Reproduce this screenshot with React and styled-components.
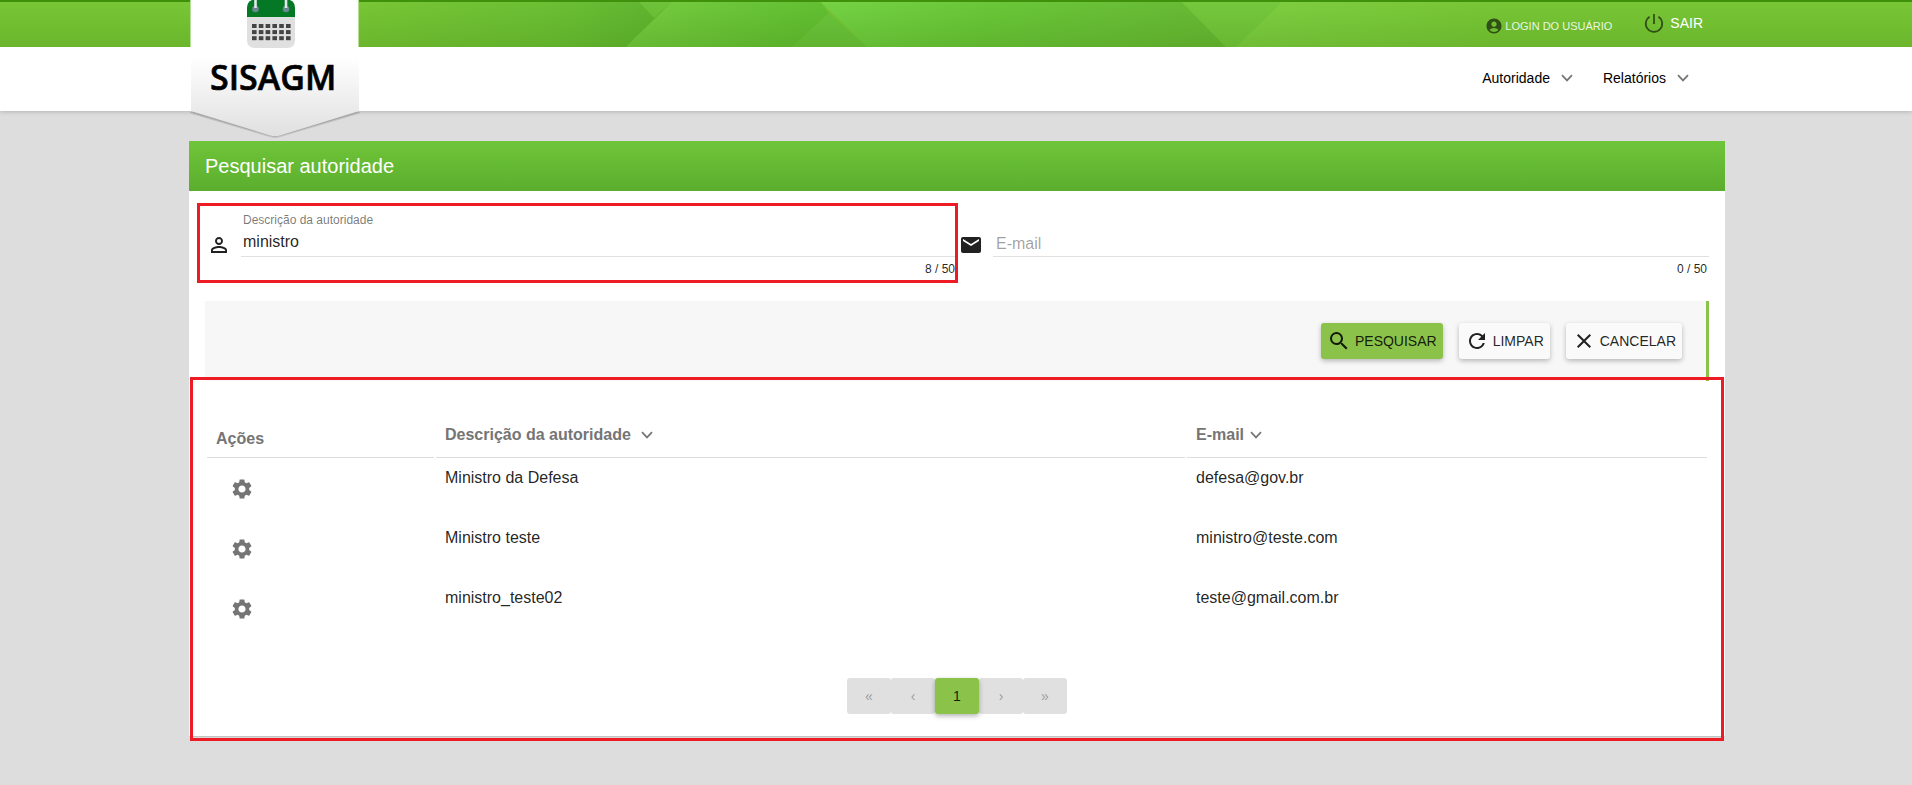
import React, { useState } from 'react';
import styled, { createGlobalStyle } from 'styled-components';
import {
  MdAccountCircle,
  MdClose,
  MdEmail,
  MdPermIdentity,
  MdRefresh,
  MdSearch,
  MdSettings,
} from 'react-icons/md';

const GlobalStyle = createGlobalStyle`
  *, *::before, *::after { box-sizing: border-box; }
  body {
    margin: 0;
    background: #ddd;
    color: rgba(0, 0, 0, 0.87);
    font-family: "Liberation Sans", Arial, sans-serif;
    font-size: 16px;
  }
  button, input { font: inherit; color: inherit; }
  a { color: inherit; text-decoration: none; }
`;

const Container = styled.div`
  position: relative;
  max-width: 1536px;
  margin: 0 auto;
`;

/* Header */

const Header = styled.header`
  position: relative;
  padding-left: 2px;
  background: #fff;
  box-shadow: 0 1px 4px rgba(0, 0, 0, 0.18);
`;

const BannerArt = styled.svg`
  position: absolute;
  top: 0;
  left: 0;
  width: 100%;
  height: 47px;
`;

const UserBar = styled.div`
  display: flex;
  justify-content: flex-end;
  align-items: center;
  gap: 32px;
  height: 47px;
  padding-right: 22px;
  color: #fff;
`;

const UserLink = styled.a`
  display: flex;
  align-items: center;
  gap: 2px;
  padding-top: 4px;
  font-size: 11px;
  color: rgba(255, 255, 255, 0.87);
  svg { color: rgba(0, 0, 0, 0.58); }
`;

const LogoutButton = styled.button`
  display: flex;
  align-items: center;
  gap: 6px;
  padding: 0 0 2px;
  border: 0;
  background: none;
  color: #fff;
  font-size: 14px;
  cursor: pointer;
  svg { color: rgba(0, 0, 0, 0.58); }
`;

const MainNav = styled.nav`
  display: flex;
  justify-content: flex-end;
  align-items: center;
  gap: 30px;
  height: 64px;
  padding: 0 36px 2px 0;
`;

const NavButton = styled.button`
  display: flex;
  align-items: center;
  gap: 11px;
  padding: 0;
  border: 0;
  background: none;
  color: #000;
  font-size: 14px;
  cursor: pointer;
  svg { color: #757575; }
`;

const LogoLink = styled.a`
  position: absolute;
  z-index: 2;
  top: 0;
  left: 0;
  width: 172px;
  height: 140px;
`;

const LogoName = styled.text`
  font-family: "Open Sans", "Noto Sans", sans-serif;
  font-size: 34px;
  font-weight: 600;
`;

/* Panel */

const Main = styled.main`
  padding: 30px 0 44px 2px;
`;

const Panel = styled.section`
  background: #fff;
  box-shadow: 0 2px 1px -1px rgba(0, 0, 0, 0.12);
`;

const PanelTitle = styled.h1`
  margin: 0;
  padding: 0 16px;
  background: linear-gradient(#6fc53a, #5bae2d);
  color: #fff;
  font-size: 20px;
  font-weight: 400;
  line-height: 50px;
`;

const Highlight = styled.div`
  position: absolute;
  inset: ${(p) => p.$inset};
  border: 3px solid #ed1c24;
  pointer-events: none;
`;

const SearchForm = styled.form`
  padding: 22px 16px 0;
`;

const FieldRow = styled.div`
  display: grid;
  grid-template-columns: 1fr 1fr;
`;

const Field = styled.div`
  position: relative;
  display: grid;
  grid-template: 14px 30px auto / 26px minmax(0, 1fr);
  column-gap: 10px;
  > svg {
    grid-area: 2 / 1;
    align-self: end;
    justify-self: end;
  }
`;

const FieldLabel = styled.label`
  grid-area: ${(p) => (p.$filled ? '1 / 2' : '2 / 2')};
  padding: ${(p) => (p.$filled ? '0 2px' : '8px 3px 0')};
  font-size: ${(p) => (p.$filled ? '12px' : '16px')};
  line-height: ${(p) => (p.$filled ? '14px' : '18px')};
  color: ${(p) => (p.$filled ? 'rgba(0, 0, 0, 0.54)' : 'rgba(0, 0, 0, 0.38)')};
`;

const FieldInput = styled.input`
  grid-area: 2 / 2;
  min-width: 0;
  padding: 0 2px;
  border: 0;
  border-bottom: 1px solid #e0e0e0;
  outline: 0;
  background: none;
`;

const Counter = styled.output`
  grid-area: 3 / 2;
  padding: 5px 2px 0;
  font-size: 12px;
  line-height: 14px;
  text-align: right;
`;

const ActionBar = styled.div`
  display: flex;
  justify-content: flex-end;
  align-items: center;
  gap: 16px;
  height: 80px;
  margin-top: 25px;
  padding-right: 24px;
  border-right: 3px solid #8bc34a;
  background: #f7f7f7;
`;

const ActionButton = styled.button`
  display: flex;
  align-items: center;
  gap: 4px;
  height: 36px;
  padding: 0 6px;
  border: 0;
  border-radius: 3px;
  background: ${(p) => (p.$primary ? '#8bc34a' : '#fafafa')};
  box-shadow: 0 2px 5px rgba(0, 0, 0, 0.26);
  font-size: 14px;
  cursor: pointer;
`;

const Results = styled.div`
  position: relative;
  padding: 17px 16px 22px;
`;

const ResultTable = styled.table`
  width: 100%;
  table-layout: fixed;
  border-collapse: separate;
  border-spacing: 2px;
`;

const Column = styled.col`
  width: ${(p) => p.$width}px;
`;

const HeadCell = styled.th`
  height: 58px;
  padding: 0 9px ${(p) => (p.$sortable ? 13 : 9)}px;
  border-bottom: 1px solid #ddd;
  color: #757575;
  line-height: 18px;
  text-align: left;
  vertical-align: bottom;
`;

const SortButton = styled.button`
  display: flex;
  align-items: center;
  gap: 6px;
  padding: 0;
  border: 0;
  background: none;
  font-weight: 700;
  line-height: 18px;
  cursor: pointer;
`;

const Cell = styled.td`
  height: 58px;
  padding: 9px;
  line-height: 18px;
  vertical-align: top;
`;

const GearButton = styled.button`
  display: flex;
  align-items: center;
  justify-content: center;
  width: 40px;
  height: 40px;
  margin-left: 6px;
  padding: 0;
  border: 0;
  background: none;
  color: #757575;
  cursor: pointer;
`;

const Pagination = styled.nav`
  display: flex;
  justify-content: center;
  margin-top: 38px;
`;

const PageButton = styled.button`
  position: relative;
  z-index: ${(p) => (p.$current ? 1 : 0)};
  width: 44px;
  height: 36px;
  padding: 0;
  border: 0;
  border-radius: 3px;
  background: ${(p) => (p.$current ? '#8bc34a' : '#e0e0e0')};
  box-shadow: ${(p) => (p.$current ? '0 2px 5px rgba(0, 0, 0, 0.3)' : 'none')};
  color: ${(p) => (p.$current ? 'rgba(0, 0, 0, 0.87)' : 'rgba(0, 0, 0, 0.34)')};
  font-size: 14px;
`;

function Chevron() {
  return (
    <svg width="12" height="8" viewBox="0 0 12 8" aria-hidden="true">
      <path d="M1 1.2 6 6.4 11 1.2" fill="none" stroke="currentColor" strokeWidth="1.7" />
    </svg>
  );
}

function PowerIcon() {
  return (
    <svg width="20" height="20" viewBox="0 0 20 20" aria-hidden="true">
      <path
        d="M5.6 3.7A8.2 8.2 0 1 0 14.4 3.7M10 1V11"
        fill="none"
        stroke="currentColor"
        strokeWidth="1.8"
      />
    </svg>
  );
}

function Banner() {
  return (
    <BannerArt viewBox="0 0 1912 47" preserveAspectRatio="xMidYMid slice" aria-hidden="true">
      <defs>
        <linearGradient id="deep" x1="0" y1="0" x2="1" y2="0">
          <stop offset="0" stopColor="#5fb832" stopOpacity="0" />
          <stop offset="0.6" stopColor="#5fb832" stopOpacity="0.45" />
          <stop offset="1" stopColor="#5ab02e" stopOpacity="0.9" />
        </linearGradient>
        <linearGradient id="facet" x1="0" y1="0" x2="1" y2="0.15">
          <stop offset="0" stopColor="#78cd42" />
          <stop offset="1" stopColor="#63bf32" />
        </linearGradient>
        <linearGradient id="wide" x1="0" y1="0" x2="1" y2="0.1">
          <stop offset="0" stopColor="#76d345" />
          <stop offset="0.45" stopColor="#6bc739" />
          <stop offset="1" stopColor="#69b935" />
        </linearGradient>
        <linearGradient id="fade" x1="0" y1="0" x2="1" y2="0">
          <stop offset="0" stopColor="#80cf42" />
          <stop offset="1" stopColor="#79c636" />
        </linearGradient>
        <linearGradient id="shade" x1="0" y1="0" x2="0" y2="1">
          <stop offset="0" stopColor="#1e7a00" stopOpacity="0" />
          <stop offset="1" stopColor="#2e6a00" stopOpacity="0.18" />
        </linearGradient>
      </defs>
      <path d="M0 0H1912V47H0Z" fill="#79c636" />
      <path d="M360 0H674L626 47H360Z" fill="url(#deep)" />
      <path d="M637 0H674L654 18Z" fill="#6fc33a" />
      <path d="M674 0H819L829 13 792 47H626Z" fill="url(#facet)" />
      <path d="M829 13 792 47H867Z" fill="#6cc43b" />
      <path d="M819 0H1180L1226 47H867Z" fill="url(#wide)" />
      <path d="M1180 0H1284L1236 47H1226Z" fill="#76c83d" />
      <path d="M1284 0H1500V47H1236Z" fill="url(#fade)" />
      <path d="M0 0H1912V47H0Z" fill="url(#shade)" />
      <path d="M0 0H1912V2H0Z" fill="#3f900a" />
    </BannerArt>
  );
}

function Logo() {
  const columns = [0, 1, 2, 3, 4, 5];
  const rows = [0, 1, 2];
  return (
    <LogoLink href="#" aria-label="SISAGM">
      <svg width="172" height="140" viewBox="0 0 172 140">
        <defs>
          <linearGradient id="ribbon" x1="0" y1="0" x2="0" y2="1">
            <stop offset="0.42" stopColor="#fff" />
            <stop offset="1" stopColor="#e0e0e0" />
          </linearGradient>
        </defs>
        <path
          d="M1 111.500V113L81 136.600Q86 138.200 91 136.600L171 113V111.500Z"
          fill="#a9a9a9"
          stroke="#c4c4c4"
          strokeWidth="1"
        />
        <path d="M1 0H170V47H1Z" fill="#b5df96" />
        <path d="M2 0H169V47H170V111L91 135.400Q86 137 81 135.400L2 111Z" fill="url(#ribbon)" />
        <path d="M58 15H106V40Q106 48 98 48H66Q58 48 58 40Z" fill="#e0e0e0" />
        <path d="M58 17V8Q58 2 63 0H101Q106 2 106 8V17Z" fill="#057826" />
        <circle cx="66.500" cy="9" r="3.300" fill="#6b8790" />
        <circle cx="97" cy="9" r="3.300" fill="#6b8790" />
        <path d="M66.500 0V8M97 0V8" stroke="#e3e8ea" strokeWidth="2.600" />
        {rows.map((r) =>
          columns.map((c) => (
            <rect
              key={`${r}-${c}`}
              x={63 + c * 6.8}
              y={24 + r * 6.1}
              width="4.600"
              height="4"
              fill="#444"
            />
          ))
        )}
        <LogoName x="21" y="90" stroke="#000" strokeWidth="0.6">SISAGM</LogoName>
      </svg>
    </LogoLink>
  );
}

function TextField({ id, label, icon: Icon, initial = '', highlighted }) {
  const [value, setValue] = useState(initial);
  return (
    <Field>
      <Icon size={24} aria-hidden="true" />
      <FieldLabel htmlFor={id} $filled={value !== ''}>{label}</FieldLabel>
      <FieldInput
        id={id}
        type="text"
        maxLength={50}
        value={value}
        onChange={(e) => setValue(e.target.value)}
      />
      <Counter htmlFor={id}>{value.length} / 50</Counter>
      {highlighted && <Highlight $inset="-10px -1px -7px -8px" />}
    </Field>
  );
}

const authorities = [
  { name: 'Ministro da Defesa', email: 'defesa@gov.br' },
  { name: 'Ministro teste', email: 'ministro@teste.com' },
  { name: 'ministro_teste02', email: 'teste@gmail.com.br' },
];

const pages = [
  { text: '«', label: 'Primeira página' },
  { text: '‹', label: 'Página anterior' },
  { text: '1', label: 'Página 1', current: true },
  { text: '›', label: 'Próxima página' },
  { text: '»', label: 'Última página' },
];

export default function App() {
  return (
    <>
      <GlobalStyle />
      <Header>
        <Banner />
        <Container>
          <Logo />
          <UserBar>
            <UserLink href="#">
              <MdAccountCircle size={18} aria-hidden="true" />
              LOGIN DO USUÁRIO
            </UserLink>
            <LogoutButton type="button">
              <PowerIcon />
              SAIR
            </LogoutButton>
          </UserBar>
          <MainNav>
            <NavButton type="button">Autoridade<Chevron /></NavButton>
            <NavButton type="button">Relatórios<Chevron /></NavButton>
          </MainNav>
        </Container>
      </Header>
      <Main>
        <Container>
          <Panel>
            <PanelTitle>Pesquisar autoridade</PanelTitle>
            <SearchForm onSubmit={(e) => e.preventDefault()}>
              <FieldRow>
                <TextField
                  id="descricao"
                  label="Descrição da autoridade"
                  icon={MdPermIdentity}
                  initial="ministro"
                  highlighted
                />
                <TextField id="email" label="E-mail" icon={MdEmail} />
              </FieldRow>
              <ActionBar>
                <ActionButton type="submit" $primary>
                  <MdSearch size={24} aria-hidden="true" />
                  PESQUISAR
                </ActionButton>
                <ActionButton type="button">
                  <MdRefresh size={24} aria-hidden="true" />
                  LIMPAR
                </ActionButton>
                <ActionButton type="button">
                  <MdClose size={24} aria-hidden="true" />
                  CANCELAR
                </ActionButton>
              </ActionBar>
            </SearchForm>
            <Results>
              <ResultTable>
                <colgroup>
                  <Column $width={227} />
                  <Column $width={749} />
                  <Column $width={520} />
                </colgroup>
                <thead>
                  <tr>
                    <HeadCell scope="col">Ações</HeadCell>
                    <HeadCell scope="col" $sortable>
                      <SortButton type="button">{'Descrição da autoridade\u00a0'}<Chevron /></SortButton>
                    </HeadCell>
                    <HeadCell scope="col" $sortable>
                      <SortButton type="button">E-mail<Chevron /></SortButton>
                    </HeadCell>
                  </tr>
                </thead>
                <tbody>
                  {authorities.map((a) => (
                    <tr key={a.email}>
                      <Cell>
                        <GearButton type="button" aria-label={`Ações de ${a.name}`}>
                          <MdSettings size={24} aria-hidden="true" />
                        </GearButton>
                      </Cell>
                      <Cell>{a.name}</Cell>
                      <Cell>{a.email}</Cell>
                    </tr>
                  ))}
                </tbody>
              </ResultTable>
              <Pagination aria-label="Paginação">
                {pages.map((p) => (
                  <PageButton
                    key={p.text}
                    type="button"
                    aria-label={p.label}
                    aria-current={p.current ? 'page' : undefined}
                    disabled={!p.current}
                    $current={p.current}
                  >
                    {p.text}
                  </PageButton>
                ))}
              </Pagination>
              <Highlight $inset="-4px 1px -5px" />
            </Results>
          </Panel>
        </Container>
      </Main>
    </>
  );
}
